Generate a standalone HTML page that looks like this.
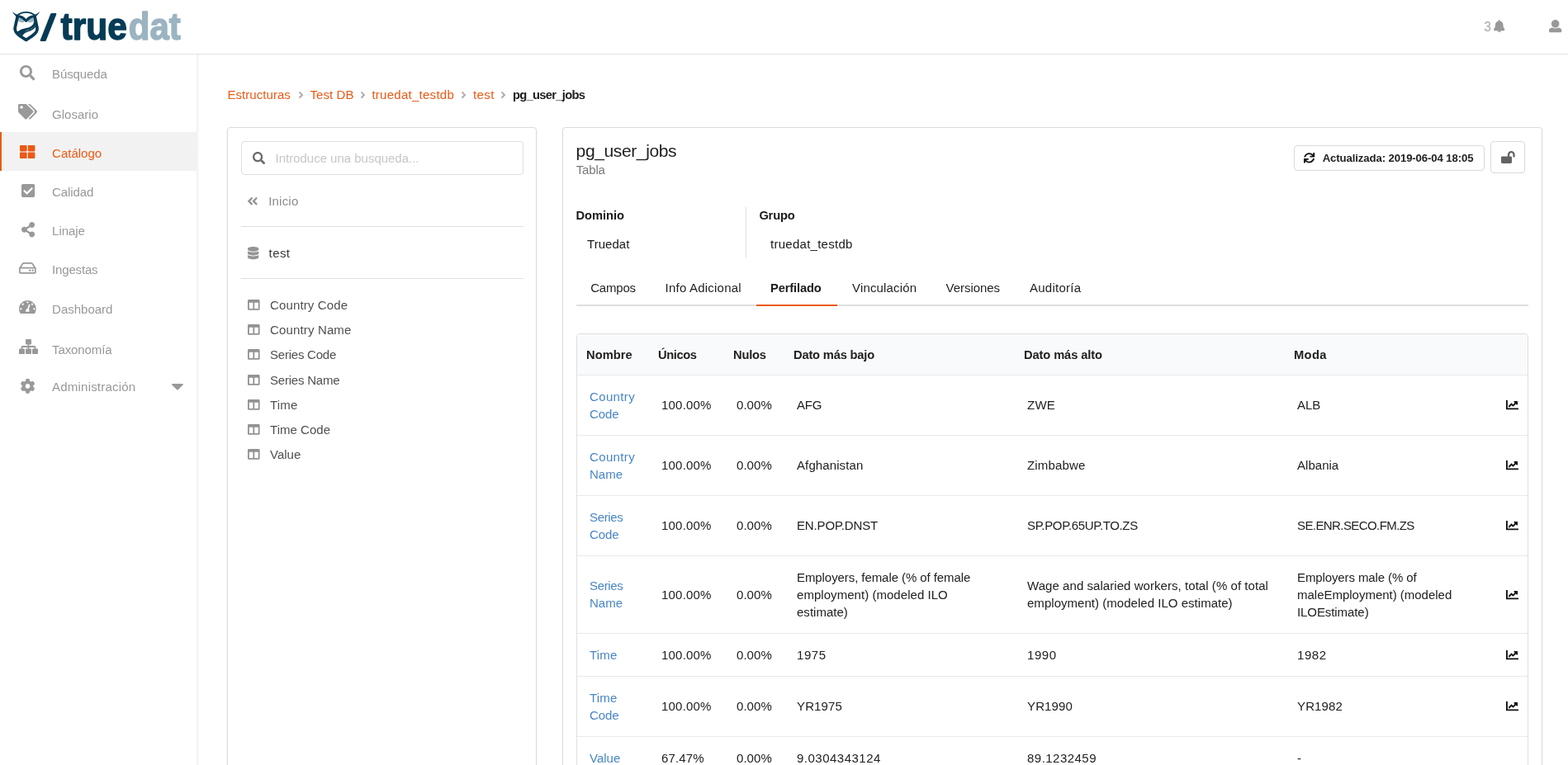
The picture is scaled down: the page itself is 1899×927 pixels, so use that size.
<!DOCTYPE html>
<html lang="es">
<head>
<meta charset="utf-8">
<title>truedat - pg_user_jobs</title>
<style>
*{box-sizing:border-box}
html,body{margin:0;padding:0;width:1899px;height:927px;overflow:hidden;background:#fff;font-family:"Liberation Sans",sans-serif}
#app{position:relative;width:1899px;height:927px;overflow:hidden;background:#fff;will-change:transform;font-family:"Liberation Sans",sans-serif;font-size:15.4px;color:#212121}
.t{position:absolute;white-space:nowrap;margin:0;padding:0;font-weight:400}
.ic{position:absolute;display:block;overflow:visible}
a{text-decoration:none;color:inherit}
ul{list-style:none;margin:0;padding:0}
#topbar{position:absolute;left:0;top:0;width:1899px;height:66px;background:#fff;border-bottom:1px solid #e6e6e6;box-shadow:0 1px 1px rgba(0,0,0,.025);z-index:3}
#sidebar{position:absolute;left:0;top:66px;width:238px;height:861px;background:#fff;z-index:2}
#sidebar:after{content:'';position:absolute;left:238px;top:0;width:4px;height:861px;background:linear-gradient(to right,rgba(0,0,0,.06),rgba(0,0,0,.035) 35%,rgba(0,0,0,0))}
#sidebar .active{position:absolute;left:0;top:94px;width:238px;height:47px;background:#f2f2f2;border-left:2px solid #ea5a16}
.seg{position:absolute;background:#fff;border:1px solid #dcdcdd;border-radius:4px;box-shadow:0 1px 2px 0 rgba(34,36,38,.12)}
.hr{position:absolute;height:1px;background:#dededf}
#search{position:absolute;left:292px;top:171px;width:342px;height:41px;border:1px solid #dededf;border-radius:4px;background:#fff}
.lbl{position:absolute;border:1px solid #d9d9da;border-radius:4px;background:#fff}
#tabs{position:absolute;left:698px;top:369px;width:1153px;height:2px;background:#dededf}
#tabs i{position:absolute;left:218px;top:0;width:98px;height:2px;background:#ea5a16}
table{position:absolute;left:698px;top:404px;width:1153px;border-collapse:separate;border-spacing:0;border:1px solid #dededf;border-radius:4px;table-layout:fixed;font-size:15.02px;line-height:21px;color:#212121}
th{height:50px;padding:2px 0 0 11px;text-align:left;font-weight:700;font-size:14.71px;background:#f9fafb;border-bottom:1px solid #e7e8e9;white-space:nowrap;vertical-align:middle}
th:first-child{border-radius:3px 0 0 0}
th:last-child{border-radius:0 3px 0 0}
td{padding:0 0 0 15px;vertical-align:middle;white-space:nowrap;border-top:1px solid #e9e9e9}
tbody tr:first-child td{border-top:none}
td a{color:#4a86c5}
td.o{padding-bottom:1px}
td.c{padding-left:11px}
td.c svg{display:inline-block;width:15px;height:11.25px;vertical-align:baseline;overflow:visible}
</style>
</head>
<body>
<div id="app">

<header id="topbar">
<svg class="ic" style="left:13px;top:12px;width:38px;height:40px" viewBox="13 12 38 40">
<ellipse cx="25.6" cy="24.4" rx="4.3" ry="2.7" fill="#9bb4c1" transform="rotate(14 25.6 24.4)"/>
<ellipse cx="37.6" cy="24.4" rx="4.3" ry="2.7" fill="#9bb4c1" transform="rotate(-14 37.6 24.4)"/>
<g fill="none" stroke="#063b56" stroke-linecap="round" stroke-linejoin="round">
<path d="M21.2 19.8 L18.2 33.6 C17.4 38.4 20.6 41.4 31.6 48.4 C42.6 41.4 45.8 38.4 45 33.6 L42 19.8" stroke-width="3.7"/>
<path d="M20.8 19.6 C25.4 19.6 28.8 21.8 31.6 25.4 C34.4 21.8 37.8 19.6 42.4 19.6" stroke-width="3.1"/>
<path d="M20.4 18.9 C26.8 13.5 36.4 13.5 42.8 18.9" stroke-width="1.7"/>
<path d="M42.6 26 C42 31.4 38.4 34.4 32 35.4 C27.4 36.2 24.4 37.6 22 39.4" stroke-width="2.7"/>
<path d="M43 31.4 C40.4 35.6 36.4 37 33.2 37.8 C30.4 38.8 28 40.4 26.6 42.4" stroke-width="1.7"/>
</g>
<path d="M15 14 C17.6 16.2 19.6 17.4 22.2 18.4 L20.2 20.4 C18 18.6 16.4 16.8 15 14 Z" fill="#063b56"/>
<path d="M48.2 14 C45.6 16.2 43.600 17.4 41 18.4 L43 20.4 C45.2 18.600 46.8 16.8 48.200 14 Z" fill="#063b56"/>
<path d="M21.600 39.600 C24.200 37.4 29 36.400 33.400 36.400 C30.400 38 27.800 40.200 26.600 42.800 Z" fill="#063b56"/>
</svg>
<svg class="ic" style="left:44px;top:6px;width:178px;height:52px" viewBox="44 6 178 52"><text x="52.6" y="48.3" font-family="Liberation Sans, sans-serif" font-weight="700" font-size="42.5" fill="#063b56" stroke="#063b56" stroke-width="2.3" stroke-linejoin="round" transform="translate(58.2 32.8) skewX(-11.5) translate(-58.2 -32.8)">/</text><text y="48.3" font-family="Liberation Sans, sans-serif" font-weight="700" font-size="47" stroke-width="1.5" stroke-linejoin="round"><tspan x="73.6" textLength="80.2" lengthAdjust="spacingAndGlyphs" fill="#063b56" stroke="#063b56">true</tspan><tspan x="155.8" textLength="63" lengthAdjust="spacingAndGlyphs" fill="#9bb4c1" stroke="#9bb4c1">dat</tspan></text></svg>
<div class="t" style="left:1797.2px;top:23px;font-size:15.6px;line-height:20px;color:#a6a6a6;letter-spacing:0.605px;">3</div>
<svg class="ic" style="left:1808.9px;top:23.9px;width:13.4px;height:15.0px" viewBox="0.0 0.0 448.0 512.0" preserveAspectRatio="none"><path fill="#999999" d="M433.884 366.059C411.634 343.809 384 316.118 384 208c0-79.394-57.831-145.269-133.663-157.83A31.845 31.845 0 0 0 256 32c0-17.673-14.327-32-32-32s-32 14.327-32 32c0 6.75 2.095 13.008 5.663 18.170C121.831 62.731 64 128.606 64 208c0 108.118-27.643 135.809-49.893 158.059C-16.042 396.208 5.325 448 48.048 448H160c0 35.346 28.654 64 64 64s64-28.654 64-64h111.943c42.638 0 64.151-51.731 33.941-81.941zM224 472a8 8 0 0 1 0 16c-22.056 0-40-17.944-40-40h16c0 13.234 10.766 24 24 24z"/></svg>
<svg class="ic" style="left:1875.8px;top:23.7px;width:15.3px;height:15.3px" viewBox="0 0 512 512" preserveAspectRatio="none"><path fill="#999999" d="M256 0c88.366 0 160 71.634 160 160s-71.634 160-160 160S96 248.366 96 160 167.634 0 256 0zm183.283 333.821l-71.313-17.828c-74.923 53.890-165.738 41.864-223.940 0l-71.313 17.828C29.981 344.505 0 382.903 0 426.955V464c0 26.510 21.490 48 48 48h416c26.510 0 48-21.490 48-48v-37.045c0-44.052-29.981-82.450-72.717-93.134z"/></svg>
</header>
<nav id="sidebar">
<div class="active"></div>
</nav>
<nav id="menu" style="position:absolute;left:0;top:0;z-index:4">
<a href="#"><svg class="ic" style="left:24.2px;top:78.8px;width:18.4px;height:18.4px" viewBox="0.0 0.0 512.0 512.1" preserveAspectRatio="none"><path fill="#999999" d="M505 442.7L405.3 343c-4.5-4.5-10.6-7-17-7H372c27.6-35.3 44-79.7 44-128C416 93.1 322.9 0 208 0S0 93.1 0 208s93.1 208 208 208c48.3 0 92.7-16.4 128-44v16.3c0 6.4 2.5 12.5 7 17l99.700 99.700c9.400 9.400 24.600 9.400 33.900 0l28.300-28.300c9.400-9.400 9.400-24.600.1-34zM208 336c-70.7 0-128-57.2-128-128 0-70.7 57.2-128 128-128 70.7 0 128 57.2 128 128 0 70.7-57.2 128-128 128z"/></svg><span class="t" style="left:63.1px;top:80px;font-size:15.02px;line-height:20px;color:#999999;letter-spacing:-0.122px;">Búsqueda</span></a>
<a href="#"><svg class="ic" style="left:22.3px;top:125.85px;width:23.0px;height:18.4px" viewBox="0.0 0.0 640.0 512.0" preserveAspectRatio="none"><path fill="#999999" d="M497.941 225.941L286.059 14.059A48 48 0 0 0 252.118 0H48C21.49 0 0 21.49 0 48v204.118a48 48 0 0 0 14.059 33.941l211.882 211.882c18.744 18.745 49.136 18.746 67.882 0l204.118-204.118c18.745-18.745 18.745-49.137 0-67.882zM112 160c-26.51 0-48-21.49-48-48s21.490-48 48-48 48 21.490 48 48-21.490 48-48 48zm513.941 133.823L421.823 497.941c-18.745 18.745-49.137 18.745-67.882 0l-.36-.36L527.640 323.522c16.999-16.999 26.360-39.600 26.360-63.640s-9.362-46.641-26.360-63.640L331.397 0h48.721a48 48 0 0 1 33.941 14.059l211.882 211.882c18.745 18.745 18.745 49.137 0 67.882z"/></svg><span class="t" style="left:63.1px;top:129px;font-size:15.02px;line-height:20px;color:#999999;">Glosario</span></a>
<a href="#"><svg class="ic" style="left:24.3px;top:176.05px;width:18.4px;height:16.1px" viewBox="0.0 32.0 512.0 448.0" preserveAspectRatio="none"><path fill="#ea5a16" d="M296 32h192c13.255 0 24 10.745 24 24v160c0 13.255-10.745 24-24 24H296c-13.255 0-24-10.745-24-24V56c0-13.255 10.745-24 24-24zm-80 0H24C10.745 32 0 42.745 0 56v160c0 13.255 10.745 24 24 24h192c13.255 0 24-10.745 24-24V56c0-13.255-10.745-24-24-24zM0 296v160c0 13.255 10.745 24 24 24h192c13.255 0 24-10.745 24-24V296c0-13.255-10.745-24-24-24H24c-13.255 0-24 10.745-24 24zm296 184h192c13.255 0 24-10.745 24-24V296c0-13.255-10.745-24-24-24H296c-13.255 0-24 10.745-24 24v160c0 13.255 10.745 24 24 24z"/></svg><span class="t" style="left:63.1px;top:176px;font-size:15.02px;line-height:20px;color:#ea5a16;letter-spacing:-0.020px;">Catálogo</span></a>
<a href="#"><svg class="ic" style="left:25.75px;top:223.25px;width:16.1px;height:16.1px" viewBox="0.0 32.0 448.0 448.0" preserveAspectRatio="none"><path fill="#999999" d="M400 480H48c-26.51 0-48-21.49-48-48V80c0-26.51 21.49-48 48-48h352c26.51 0 48 21.49 48 48v352c0 26.51-21.49 48-48 48zm-204.686-98.059l184-184c6.248-6.248 6.248-16.379 0-22.627l-22.627-22.627c-6.248-6.248-16.379-6.249-22.628 0L184 302.745l-70.059-70.059c-6.248-6.248-16.379-6.248-22.628 0l-22.627 22.627c-6.248 6.248-6.248 16.379 0 22.627l104 104c6.249 6.25 16.379 6.25 22.628.001z"/></svg><span class="t" style="left:63.1px;top:223px;font-size:15.02px;line-height:20px;color:#999999;letter-spacing:-0.108px;">Calidad</span></a>
<a href="#"><svg class="ic" style="left:25.6px;top:268.8px;width:16.1px;height:18.4px" viewBox="0.0 0.0 448.0 512.0" preserveAspectRatio="none"><path fill="#999999" d="M352 320c-22.608 0-43.387 7.819-59.79 20.895l-102.486-64.054a96.551 96.551 0 0 0 0-41.683l102.486-64.054C308.613 184.181 329.392 192 352 192c53.019 0 96-42.981 96-96S405.019 0 352 0s-96 42.981-96 96c0 7.158.79 14.13 2.276 20.841L155.790 180.895C139.387 167.819 118.608 160 96 160c-53.019 0-96 42.981-96 96s42.981 96 96 96c22.608 0 43.387-7.819 59.790-20.895l102.486 64.054A96.301 96.301 0 0 0 256 416c0 53.019 42.981 96 96 96s96-42.981 96-96-42.981-96-96-96z"/></svg><span class="t" style="left:63.1px;top:270px;font-size:15.02px;line-height:20px;color:#999999;letter-spacing:-0.068px;">Linaje</span></a>
<a href="#"><svg class="ic" style="left:23.05px;top:318.4px;width:20.7px;height:13.8px" viewBox="0.0 64.0 576.0 384.0" preserveAspectRatio="none"><path fill="#999999" d="M567.403 235.642L462.323 84.589A48 48 0 0 0 422.919 64H153.081a48 48 0 0 0-39.404 20.589L8.597 235.642A48.001 48.001 0 0 0 0 263.054V400c0 26.51 21.49 48 48 48h480c26.51 0 48-21.49 48-48V263.054c0-9.801-3-19.366-8.597-27.412zM153.081 112h269.838l77.913 112H75.168l77.913-112zM528 400H48V272h480v128zm-32-64c0 17.673-14.327 32-32 32s-32-14.327-32-32 14.327-32 32-32 32 14.327 32 32zm-96 0c0 17.673-14.327 32-32 32s-32-14.327-32-32 14.327-32 32-32 32 14.327 32 32z"/></svg><span class="t" style="left:63.1px;top:317px;font-size:15.02px;line-height:20px;color:#999999;letter-spacing:-0.182px;">Ingestas</span></a>
<a href="#"><svg class="ic" style="left:23.05px;top:363.95px;width:20.7px;height:16.1px" viewBox="0.0 32.0 576.0 448.0" preserveAspectRatio="none"><path fill="#999999" d="M75.694 480a48.020 48.020 0 0 1-42.448-25.571C12.023 414.3 0 368.556 0 320 0 160.942 128.942 32 288 32s288 128.942 288 288c0 48.556-12.023 94.3-33.246 134.429A48.018 48.018 0 0 1 500.306 480H75.694zM512 288c-17.673 0-32 14.327-32 32 0 17.673 14.327 32 32 32s32-14.327 32-32c0-17.673-14.327-32-32-32zM288 128c17.673 0 32-14.327 32-32 0-17.673-14.327-32-32-32s-32 14.327-32 32c0 17.673 14.327 32 32 32zM64 288c-17.673 0-32 14.327-32 32 0 17.673 14.327 32 32 32s32-14.327 32-32c0-17.673-14.327-32-32-32zm65.608-158.392c-17.673 0-32 14.327-32 32 0 17.673 14.327 32 32 32s32-14.327 32-32c0-17.673-14.327-32-32-32zm316.784 0c-17.673 0-32 14.327-32 32 0 17.673 14.327 32 32 32s32-14.327 32-32c0-17.673-14.327-32-32-32zm-87.078 31.534c-12.627-4.040-26.133 2.920-30.173 15.544l-45.923 143.511C250.108 322.645 224 350.264 224 384c0 11.821 3.220 22.881 8.809 32.380h110.383c5.588-9.499 8.809-20.559 8.809-32.380 0-19.850-9.040-37.580-23.219-49.321l45.923-143.511c4.040-12.625-2.920-26.133-15.544-30.173z"/></svg><span class="t" style="left:63.1px;top:365px;font-size:15.02px;line-height:20px;color:#999999;letter-spacing:-0.012px;">Dashboard</span></a>
<a href="#"><svg class="ic" style="left:22.55px;top:411.08px;width:23.0px;height:18.03px" viewBox="0.0 32.0 640.0 448.0" preserveAspectRatio="none"><path fill="#999999" d="M616 320h-48v-48c0-22.056-17.944-40-40-40H344v-40h48c13.255 0 24-10.745 24-24V56c0-13.255-10.745-24-24-24H248c-13.255 0-24 10.745-24 24v112c0 13.255 10.745 24 24 24h48v40H112c-22.056 0-40 17.944-40 40v48H24c-13.255 0-24 10.745-24 24v112c0 13.255 10.745 24 24 24h144c13.255 0 24-10.745 24-24V344c0-13.255-10.745-24-24-24h-48v-40h176v40h-48c-13.255 0-24 10.745-24 24v112c0 13.255 10.745 24 24 24h144c13.255 0 24-10.745 24-24V344c0-13.255-10.745-24-24-24h-48v-40h176v40h-48c-13.255 0-24 10.745-24 24v112c0 13.255 10.745 24 24 24h144c13.255 0 24-10.745 24-24V344c0-13.255-10.745-24-24-24z"/></svg><span class="t" style="left:63.1px;top:414px;font-size:15.02px;line-height:20px;color:#999999;letter-spacing:-0.120px;">Taxonomía</span></a>
<a href="#"><svg class="ic" style="left:24.97px;top:459.29px;width:17.06px;height:17.83px" viewBox="18.6 8.0 474.8 496.0" preserveAspectRatio="none"><path fill="#999999" d="M444.788 291.1l42.616 24.599c4.867 2.809 7.126 8.618 5.459 13.985-11.07 35.642-29.97 67.842-54.689 94.586a12.016 12.016 0 0 1-14.832 2.254l-42.584-24.595a191.577 191.577 0 0 1-60.759 35.13v49.182a12.01 12.01 0 0 1-9.377 11.718c-34.956 7.85-72.499 8.256-109.219.007-5.49-1.233-9.403-6.096-9.403-11.723v-49.184a191.555 191.555 0 0 1-60.759-35.13l-42.584 24.595a12.016 12.016 0 0 1-14.832-2.254c-24.718-26.744-43.619-58.944-54.689-94.586-1.667-5.366.592-11.175 5.459-13.985L67.212 291.1a193.48 193.48 0 0 1 0-70.199l-42.616-24.599c-4.867-2.809-7.126-8.618-5.459-13.985 11.07-35.642 29.97-67.842 54.689-94.586a12.016 12.016 0 0 1 14.832-2.254l42.584 24.595a191.577 191.577 0 0 1 60.759-35.13V25.759a12.01 12.01 0 0 1 9.377-11.718c34.956-7.85 72.499-8.256 109.219-.007 5.49 1.233 9.403 6.096 9.403 11.723v49.184a191.555 191.555 0 0 1 60.759 35.13l42.584-24.595a12.016 12.016 0 0 1 14.832 2.254c24.718 26.744 43.619 58.944 54.689 94.586 1.667 5.366-.592 11.175-5.459 13.985L444.788 220.9a193.485 193.485 0 0 1 0 70.2zM336 256c0-44.112-35.888-80-80-80s-80 35.888-80 80 35.888 80 80 80 80-35.888 80-80z"/></svg><span class="t" style="left:63.1px;top:459px;font-size:15.02px;line-height:20px;color:#999999;letter-spacing:0.196px;">Administración</span></a>
<svg class="ic" style="left:207.9px;top:464.9px;width:13.9px;height:7.4px" viewBox="11.3 192.0 297.3 168.6" preserveAspectRatio="none"><path fill="#999999" d="M31.3 192h257.3c17.8 0 26.7 21.5 14.1 34.1L174.100 354.800c-7.800 7.800-20.500 7.800-28.300 0L17.200 226.100C4.600 213.500 13.500 192 31.300 192z"/></svg>
</nav>
<div id="breadcrumb">
<a class="t" style="left:275.5px;top:105px;font-size:15.02px;line-height:20px;color:#ea5a16;letter-spacing:0.042px;" href="#">Estructuras</a>
<a class="t" style="left:375.5px;top:105px;font-size:15.02px;line-height:20px;color:#ea5a16;letter-spacing:0.081px;" href="#">Test DB</a>
<a class="t" style="left:450.4px;top:105px;font-size:15.02px;line-height:20px;color:#ea5a16;letter-spacing:0.260px;" href="#">truedat_testdb</a>
<a class="t" style="left:573px;top:105px;font-size:15.02px;line-height:20px;color:#ea5a16;letter-spacing:0.399px;" href="#">test</a>
<svg class="ic" style="left:361.78px;top:110.94px;width:5.25px;height:8.13px" viewBox="24.7 95.9 206.6 320.1" preserveAspectRatio="none"><path fill="#adadad" d="M224.3 273l-136 136c-9.4 9.4-24.6 9.4-33.9 0l-22.600-22.600c-9.400-9.400-9.400-24.600 0-33.900l96.400-96.400-96.400-96.400c-9.400-9.400-9.400-24.600 0-33.900L54.300 103c9.400-9.400 24.600-9.400 33.900 0l136 136c9.500 9.400 9.500 24.600.1 34z"/></svg>
<svg class="ic" style="left:436.53px;top:110.94px;width:5.25px;height:8.13px" viewBox="24.7 95.9 206.6 320.1" preserveAspectRatio="none"><path fill="#adadad" d="M224.3 273l-136 136c-9.4 9.4-24.6 9.4-33.9 0l-22.600-22.600c-9.400-9.400-9.400-24.600 0-33.900l96.400-96.400-96.400-96.400c-9.400-9.400-9.400-24.600 0-33.900L54.300 103c9.400-9.400 24.600-9.400 33.900 0l136 136c9.500 9.400 9.500 24.600.1 34z"/></svg>
<svg class="ic" style="left:558.93px;top:110.94px;width:5.25px;height:8.13px" viewBox="24.7 95.9 206.6 320.1" preserveAspectRatio="none"><path fill="#adadad" d="M224.3 273l-136 136c-9.4 9.4-24.6 9.4-33.9 0l-22.600-22.600c-9.400-9.400-9.400-24.600 0-33.900l96.400-96.400-96.400-96.400c-9.400-9.400-9.400-24.600 0-33.900L54.300 103c9.400-9.400 24.600-9.400 33.900 0l136 136c9.500 9.400 9.500 24.600.1 34z"/></svg>
<svg class="ic" style="left:607.33px;top:110.94px;width:5.25px;height:8.13px" viewBox="24.7 95.9 206.6 320.1" preserveAspectRatio="none"><path fill="#adadad" d="M224.3 273l-136 136c-9.4 9.4-24.6 9.4-33.9 0l-22.600-22.600c-9.400-9.400-9.400-24.600 0-33.900l96.400-96.400-96.400-96.400c-9.400-9.400-9.400-24.600 0-33.900L54.300 103c9.400-9.400 24.600-9.400 33.900 0l136 136c9.500 9.400 9.500 24.600.1 34z"/></svg>
<div class="t" style="left:621px;top:105px;font-size:14.71px;line-height:20px;color:#1b1c1d;font-weight:700;letter-spacing:-0.695px;">pg_user_jobs</div>
</div>
<section class="seg" style="left:275px;top:154px;width:375px;height:800px"></section>
<div id="search"></div>
<svg class="ic" style="left:305.7px;top:183.9px;width:15.1px;height:15.1px" viewBox="0.0 0.0 512.0 512.1" preserveAspectRatio="none"><path fill="#6c6c6c" d="M505 442.7L405.3 343c-4.5-4.5-10.6-7-17-7H372c27.6-35.3 44-79.7 44-128C416 93.1 322.9 0 208 0S0 93.1 0 208s93.1 208 208 208c48.3 0 92.7-16.4 128-44v16.3c0 6.4 2.5 12.5 7 17l99.700 99.700c9.400 9.400 24.600 9.400 33.900 0l28.300-28.300c9.400-9.400 9.400-24.600.1-34zM208 336c-70.7 0-128-57.2-128-128 0-70.7 57.2-128 128-128 70.7 0 128 57.2 128 128 0 70.7-57.2 128-128 128z"/></svg>
<div class="t" style="left:333.6px;top:182px;font-size:15.02px;line-height:20px;color:#c7c7c7;letter-spacing:-0.025px;">Introduce una busqueda...</div>
<svg class="ic" style="left:300.36px;top:238.76px;width:11.68px;height:9.38px" viewBox="24.7 95.9 398.7 320.1" preserveAspectRatio="none"><path fill="#949494" d="M223.7 239l136-136c9.4-9.4 24.6-9.4 33.9 0l22.600 22.600c9.400 9.400 9.400 24.600 0 33.900L319.900 256l96.400 96.400c9.400 9.400 9.400 24.600 0 33.900L393.700 409c-9.400 9.400-24.600 9.400-33.900 0l-136-136c-9.500-9.400-9.500-24.600-.1-34zm-192 34l136 136c9.400 9.400 24.600 9.400 33.900 0l22.600-22.600c9.400-9.400 9.400-24.600 0-33.900L127.900 256l96.400-96.400c9.400-9.400 9.400-24.600 0-33.900L201.700 103c-9.400-9.400-24.600-9.400-33.900 0l-136 136c-9.500 9.400-9.500 24.600-.1 34z"/></svg>
<div class="t" style="left:325.2px;top:234px;font-size:15.02px;line-height:20px;color:#8c8c8c;letter-spacing:0.201px;">Inicio</div>
<div class="hr" style="left:292px;top:274px;width:342px"></div>
<svg class="ic" style="left:299.8px;top:298.75px;width:13.3px;height:15.2px" viewBox="0.0 0.0 448.0 512.0" preserveAspectRatio="none"><path fill="#959595" d="M448 73.143v45.714C448 159.143 347.667 192 224 192S0 159.143 0 118.857V73.143C0 32.857 100.333 0 224 0s224 32.857 224 73.143zM448 176v102.857C448 319.143 347.667 352 224 352S0 319.143 0 278.857V176c48.125 33.143 136.208 48.572 224 48.572S399.874 209.143 448 176zm0 160v102.857C448 479.143 347.667 512 224 512S0 479.143 0 438.857V336c48.125 33.143 136.208 48.572 224 48.572S399.874 369.143 448 336z"/></svg>
<div class="t" style="left:325.6px;top:297px;font-size:15.02px;line-height:20px;color:#3a3a3a;letter-spacing:0.399px;">test</div>
<div class="hr" style="left:292px;top:337px;width:342px"></div>
<ul>
<li><svg class="ic" style="left:300.05px;top:362.91px;width:14.6px;height:12.78px" viewBox="0.0 32.0 512.0 448.0" preserveAspectRatio="none"><path fill="#939393" d="M464 32H48C21.49 32 0 53.49 0 80v352c0 26.51 21.49 48 48 48h416c26.51 0 48-21.49 48-48V80c0-26.51-21.49-48-48-48zM224 416H64V160h160v256zm224 0H288V160h160v256z"/></svg><span class="t" style="left:327px;top:360px;font-size:15.02px;line-height:20px;color:#505050;letter-spacing:0.127px;">Country Code</span></li>
<li><svg class="ic" style="left:300.05px;top:392.91px;width:14.6px;height:12.78px" viewBox="0.0 32.0 512.0 448.0" preserveAspectRatio="none"><path fill="#939393" d="M464 32H48C21.49 32 0 53.49 0 80v352c0 26.51 21.49 48 48 48h416c26.51 0 48-21.49 48-48V80c0-26.51-21.49-48-48-48zM224 416H64V160h160v256zm224 0H288V160h160v256z"/></svg><span class="t" style="left:327px;top:390px;font-size:15.02px;line-height:20px;color:#505050;letter-spacing:0.143px;">Country Name</span></li>
<li><svg class="ic" style="left:300.05px;top:422.91px;width:14.6px;height:12.78px" viewBox="0.0 32.0 512.0 448.0" preserveAspectRatio="none"><path fill="#939393" d="M464 32H48C21.49 32 0 53.49 0 80v352c0 26.51 21.49 48 48 48h416c26.51 0 48-21.49 48-48V80c0-26.51-21.49-48-48-48zM224 416H64V160h160v256zm224 0H288V160h160v256z"/></svg><span class="t" style="left:327px;top:420px;font-size:15.02px;line-height:20px;color:#505050;letter-spacing:-0.231px;">Series Code</span></li>
<li><svg class="ic" style="left:300.05px;top:453.91px;width:14.6px;height:12.78px" viewBox="0.0 32.0 512.0 448.0" preserveAspectRatio="none"><path fill="#939393" d="M464 32H48C21.49 32 0 53.49 0 80v352c0 26.51 21.49 48 48 48h416c26.51 0 48-21.49 48-48V80c0-26.51-21.49-48-48-48zM224 416H64V160h160v256zm224 0H288V160h160v256z"/></svg><span class="t" style="left:327px;top:451px;font-size:15.02px;line-height:20px;color:#505050;letter-spacing:-0.213px;">Series Name</span></li>
<li><svg class="ic" style="left:300.05px;top:483.91px;width:14.6px;height:12.78px" viewBox="0.0 32.0 512.0 448.0" preserveAspectRatio="none"><path fill="#939393" d="M464 32H48C21.49 32 0 53.49 0 80v352c0 26.51 21.49 48 48 48h416c26.51 0 48-21.49 48-48V80c0-26.51-21.49-48-48-48zM224 416H64V160h160v256zm224 0H288V160h160v256z"/></svg><span class="t" style="left:327px;top:481px;font-size:15.02px;line-height:20px;color:#505050;letter-spacing:0.181px;">Time</span></li>
<li><svg class="ic" style="left:300.05px;top:513.91px;width:14.6px;height:12.78px" viewBox="0.0 32.0 512.0 448.0" preserveAspectRatio="none"><path fill="#939393" d="M464 32H48C21.49 32 0 53.49 0 80v352c0 26.51 21.49 48 48 48h416c26.51 0 48-21.49 48-48V80c0-26.51-21.49-48-48-48zM224 416H64V160h160v256zm224 0H288V160h160v256z"/></svg><span class="t" style="left:327px;top:511px;font-size:15.02px;line-height:20px;color:#505050;letter-spacing:0.023px;">Time Code</span></li>
<li><svg class="ic" style="left:300.05px;top:543.91px;width:14.6px;height:12.78px" viewBox="0.0 32.0 512.0 448.0" preserveAspectRatio="none"><path fill="#939393" d="M464 32H48C21.49 32 0 53.49 0 80v352c0 26.51 21.49 48 48 48h416c26.51 0 48-21.49 48-48V80c0-26.51-21.49-48-48-48zM224 416H64V160h160v256zm224 0H288V160h160v256z"/></svg><span class="t" style="left:327px;top:541px;font-size:15.02px;line-height:20px;color:#505050;">Value</span></li>
</ul>
<section class="seg" style="left:681px;top:154px;width:1187px;height:800px"></section>
<h2 class="t" style="left:697.6px;top:169px;font-size:21.08px;line-height:28px;color:#212121;letter-spacing:-0.416px;">pg_user_jobs</h2>
<div class="t" style="left:697.8px;top:196px;font-size:15.02px;line-height:20px;color:#7a7a7a;letter-spacing:-0.200px;">Tabla</div>
<div class="lbl" style="left:1567px;top:176px;width:231px;height:31px"></div>
<svg class="ic" style="left:1579.0px;top:184.6px;width:13.2px;height:12.6px" viewBox="0.0 0.0 512.3 512.0" preserveAspectRatio="none"><path fill="#111" d="M440.935 12.574l3.966 82.766C399.416 41.904 331.674 8 256 8 134.813 8 33.933 94.924 12.296 209.824 10.908 217.193 16.604 224 24.103 224h49.084c5.57 0 10.377-3.842 11.676-9.259C103.407 137.408 172.931 80 256 80c60.893 0 114.512 30.856 146.104 77.801l-101.53-4.865c-6.845-.328-12.574 5.133-12.574 11.986v47.411c0 6.627 5.373 12 12 12h200.333c6.627 0 12-5.373 12-12V12c0-6.627-5.373-12-12-12h-47.411c-6.853 0-12.315 5.729-11.987 12.574zM256 432c-60.895 0-114.517-30.858-146.109-77.805l101.868 4.871c6.845.327 12.573-5.134 12.573-11.986v-47.412c0-6.627-5.373-12-12-12H12c-6.627 0-12 5.373-12 12V500c0 6.627 5.373 12 12 12h47.385c6.863 0 12.328-5.745 11.985-12.599l-4.129-82.575C112.725 470.166 180.405 504 256 504c121.187 0 222.067-86.924 243.704-201.824 1.388-7.369-4.308-14.176-11.807-14.176h-49.084c-5.57 0-10.377 3.842-11.676 9.259C408.593 374.592 339.069 432 256 432z"/></svg>
<div class="t" style="left:1601.7px;top:182px;font-size:13.2px;line-height:20px;color:#222;font-weight:700;letter-spacing:-0.119px;">Actualizada: 2019-06-04 18:05</div>
<div class="lbl" style="left:1805px;top:171px;width:42px;height:39px"></div>
<svg class="ic" style="left:1817.9px;top:183.1px;width:16.7px;height:15.0px" viewBox="0.0 -0.0 576.0 512.0" preserveAspectRatio="none"><path fill="#636363" d="M423.5 0C339.5.3 272 69.5 272 153.5V224H48c-26.5 0-48 21.500-48 48v192c0 26.500 21.500 48 48 48h352c26.500 0 48-21.500 48-48V272c0-26.500-21.500-48-48-48h-48v-71.100c0-39.600 31.700-72.500 71.300-72.900 40-.4 72.700 32.100 72.700 72v80c0 13.300 10.700 24 24 24h32c13.300 0 24-10.700 24-24v-80C576 68 507.500-.3 423.500 0z"/></svg>
<div class="t" style="left:697.4px;top:251px;font-size:14.71px;line-height:20px;color:#1b1b1b;font-weight:700;letter-spacing:-0.017px;">Dominio</div>
<div class="t" style="left:711px;top:286px;font-size:15.02px;line-height:20px;color:#1b1b1b;letter-spacing:0.031px;">Truedat</div>
<div style="position:absolute;left:903px;top:251px;width:1px;height:61px;background:#dededf"></div>
<div class="t" style="left:919.4px;top:251px;font-size:14.71px;line-height:20px;color:#1b1b1b;font-weight:700;letter-spacing:-0.206px;">Grupo</div>
<div class="t" style="left:933px;top:286px;font-size:15.02px;line-height:20px;color:#1b1b1b;letter-spacing:0.260px;">truedat_testdb</div>
<div id="tabs"><i></i></div>
<a class="t" style="left:715.2px;top:339px;font-size:15.02px;line-height:20px;color:#1f1f1f;letter-spacing:-0.214px;" href="#">Campos</a>
<a class="t" style="left:805.6px;top:339px;font-size:15.02px;line-height:20px;color:#1f1f1f;letter-spacing:0.205px;" href="#">Info Adicional</a>
<a class="t" style="left:933px;top:339px;font-size:14.71px;line-height:20px;color:#1b1b1b;font-weight:700;letter-spacing:-0.147px;" href="#">Perfilado</a>
<a class="t" style="left:1032px;top:339px;font-size:15.02px;line-height:20px;color:#1f1f1f;letter-spacing:0.162px;" href="#">Vinculación</a>
<a class="t" style="left:1145.6px;top:339px;font-size:15.02px;line-height:20px;color:#1f1f1f;letter-spacing:-0.056px;" href="#">Versiones</a>
<a class="t" style="left:1247px;top:339px;font-size:15.02px;line-height:20px;color:#1f1f1f;letter-spacing:0.244px;" href="#">Auditoría</a>
<table>
<colgroup><col style="width:87px"><col style="width:91px"><col style="width:73px"><col style="width:279px"><col style="width:327px"><col style="width:257px"><col style="width:37px"></colgroup>
<thead><tr>
<th><span style="letter-spacing:0.046px;">Nombre</span></th>
<th><span style="letter-spacing:-0.394px;">Únicos</span></th>
<th><span style="letter-spacing:-0.202px;">Nulos</span></th>
<th><span style="letter-spacing:-0.194px;">Dato más bajo</span></th>
<th><span style="letter-spacing:-0.122px;">Dato más alto</span></th>
<th><span style="letter-spacing:0.328px;">Moda</span></th>
<th></th></tr></thead><tbody>
<tr style="height:72px"><td><a href="#"><span style="letter-spacing:0.345px;">Country</span><br><span style="letter-spacing:-0.071px;">Code</span></a></td><td class=o><span style="letter-spacing:0.192px;">100.00%</span></td><td class=o><span style="letter-spacing:0.038px;">0.00%</span></td><td class=o><span style="letter-spacing:-0.197px;">AFG</span></td><td class=o><span style="letter-spacing:0.248px;">ZWE</span></td><td class=o><span style="letter-spacing:-0.032px;">ALB</span></td><td class="c o"><svg viewBox="0 64 512 384" preserveAspectRatio="none"><path fill="#111" d="M500 384c6.600 0 12 5.400 12 12v40c0 6.600-5.400 12-12 12H12c-6.600 0-12-5.400-12-12V76c0-6.600 5.400-12 12-12h40c6.600 0 12 5.400 12 12v308h436zM456 96H344c-21.400 0-32.100 25.900-17 41l32.900 32.900-72 72.900-55.600-55.600c-4.700-4.700-12.200-4.700-16.900 0L96.400 305c-4.700 4.600-4.800 12.200-.1 16.900l28.500 28.500c4.700 4.700 12.200 4.700 16.900 0l82.300-82.300 55.500 55.500c4.700 4.700 12.300 4.700 16.900 0l109-109.400 33.500 33.500c15.100 15.100 41 4.400 41-17V120c.1-13.300-10.600-24-23.900-24z"/></svg></td></tr>
<tr style="height:73px"><td><a href="#"><span style="letter-spacing:0.345px;">Country</span><br><span style="letter-spacing:-0.021px;">Name</span></a></td><td class=o><span style="letter-spacing:0.192px;">100.00%</span></td><td class=o><span style="letter-spacing:0.038px;">0.00%</span></td><td class=o><span style="letter-spacing:0.097px;">Afghanistan</span></td><td class=o><span style="letter-spacing:0.157px;">Zimbabwe</span></td><td class=o><span style="letter-spacing:0.021px;">Albania</span></td><td class="c o"><svg viewBox="0 64 512 384" preserveAspectRatio="none"><path fill="#111" d="M500 384c6.600 0 12 5.400 12 12v40c0 6.600-5.400 12-12 12H12c-6.600 0-12-5.400-12-12V76c0-6.600 5.400-12 12-12h40c6.600 0 12 5.400 12 12v308h436zM456 96H344c-21.400 0-32.100 25.900-17 41l32.900 32.900-72 72.900-55.600-55.600c-4.700-4.700-12.200-4.700-16.900 0L96.400 305c-4.700 4.600-4.800 12.200-.1 16.900l28.500 28.500c4.700 4.700 12.200 4.700 16.900 0l82.300-82.300 55.500 55.500c4.700 4.700 12.300 4.700 16.900 0l109-109.400 33.500 33.500c15.100 15.100 41 4.400 41-17V120c.1-13.300-10.600-24-23.900-24z"/></svg></td></tr>
<tr style="height:73px"><td><a href="#"><span style="letter-spacing:-0.338px;">Series</span><br><span style="letter-spacing:-0.071px;">Code</span></a></td><td class=o><span style="letter-spacing:0.192px;">100.00%</span></td><td class=o><span style="letter-spacing:0.038px;">0.00%</span></td><td class=o><span style="letter-spacing:-0.160px;">EN.POP.DNST</span></td><td class=o><span style="letter-spacing:-0.360px;">SP.POP.65UP.TO.ZS</span></td><td class=o><span style="letter-spacing:-0.595px;">SE.ENR.SECO.FM.ZS</span></td><td class="c o"><svg viewBox="0 64 512 384" preserveAspectRatio="none"><path fill="#111" d="M500 384c6.600 0 12 5.400 12 12v40c0 6.600-5.400 12-12 12H12c-6.600 0-12-5.400-12-12V76c0-6.600 5.400-12 12-12h40c6.600 0 12 5.400 12 12v308h436zM456 96H344c-21.400 0-32.100 25.900-17 41l32.900 32.900-72 72.900-55.600-55.600c-4.700-4.700-12.200-4.700-16.900 0L96.400 305c-4.700 4.600-4.800 12.200-.1 16.900l28.500 28.500c4.700 4.700 12.200 4.700 16.900 0l82.300-82.300 55.500 55.500c4.700 4.700 12.300 4.700 16.900 0l109-109.400 33.500 33.500c15.100 15.100 41 4.400 41-17V120c.1-13.300-10.600-24-23.900-24z"/></svg></td></tr>
<tr style="height:94px"><td class=o><a href="#"><span style="letter-spacing:-0.338px;">Series</span><br><span style="letter-spacing:-0.021px;">Name</span></a></td><td><span style="letter-spacing:0.192px;">100.00%</span></td><td><span style="letter-spacing:0.038px;">0.00%</span></td><td><span style="letter-spacing:-0.085px;">Employers, female (% of female</span><br><span style="letter-spacing:0.037px;">employment) (modeled ILO</span><br><span style="letter-spacing:0.013px;">estimate)</span></td><td class=o><span style="letter-spacing:0.048px;">Wage and salaried workers, total (% of total</span><br><span style="letter-spacing:0.023px;">employment) (modeled ILO estimate)</span></td><td><span style="letter-spacing:-0.119px;">Employers male (% of</span><br><span style="letter-spacing:-0.022px;">maleEmployment) (modeled</span><br><span style="letter-spacing:-0.090px;">ILOEstimate)</span></td><td class="c"><svg viewBox="0 64 512 384" preserveAspectRatio="none"><path fill="#111" d="M500 384c6.600 0 12 5.400 12 12v40c0 6.600-5.400 12-12 12H12c-6.600 0-12-5.400-12-12V76c0-6.600 5.400-12 12-12h40c6.600 0 12 5.400 12 12v308h436zM456 96H344c-21.400 0-32.100 25.900-17 41l32.900 32.900-72 72.900-55.600-55.600c-4.700-4.700-12.200-4.700-16.900 0L96.400 305c-4.700 4.600-4.800 12.200-.1 16.900l28.500 28.500c4.700 4.700 12.200 4.700 16.900 0l82.300-82.300 55.500 55.500c4.700 4.700 12.300 4.700 16.900 0l109-109.400 33.500 33.500c15.100 15.100 41 4.400 41-17V120c.1-13.300-10.600-24-23.900-24z"/></svg></td></tr>
<tr style="height:52px"><td><a href="#"><span style="letter-spacing:0.181px;">Time</span></a></td><td><span style="letter-spacing:0.192px;">100.00%</span></td><td><span style="letter-spacing:0.038px;">0.00%</span></td><td><span style="letter-spacing:0.579px;">1975</span></td><td><span style="letter-spacing:0.579px;">1990</span></td><td><span style="letter-spacing:0.579px;">1982</span></td><td class="c"><svg viewBox="0 64 512 384" preserveAspectRatio="none"><path fill="#111" d="M500 384c6.600 0 12 5.400 12 12v40c0 6.600-5.400 12-12 12H12c-6.600 0-12-5.400-12-12V76c0-6.600 5.400-12 12-12h40c6.600 0 12 5.400 12 12v308h436zM456 96H344c-21.400 0-32.100 25.900-17 41l32.900 32.900-72 72.900-55.600-55.600c-4.700-4.700-12.200-4.700-16.900 0L96.400 305c-4.700 4.600-4.800 12.200-.1 16.900l28.500 28.500c4.700 4.700 12.200 4.700 16.900 0l82.300-82.300 55.500 55.500c4.700 4.700 12.300 4.700 16.900 0l109-109.400 33.500 33.500c15.100 15.100 41 4.400 41-17V120c.1-13.300-10.600-24-23.900-24z"/></svg></td></tr>
<tr style="height:73px"><td><a href="#"><span style="letter-spacing:0.181px;">Time</span><br><span style="letter-spacing:-0.071px;">Code</span></a></td><td class=o><span style="letter-spacing:0.192px;">100.00%</span></td><td class=o><span style="letter-spacing:0.038px;">0.00%</span></td><td class=o><span style="letter-spacing:0.118px;">YR1975</span></td><td class=o><span style="letter-spacing:0.118px;">YR1990</span></td><td class=o><span style="letter-spacing:0.118px;">YR1982</span></td><td class="c o"><svg viewBox="0 64 512 384" preserveAspectRatio="none"><path fill="#111" d="M500 384c6.600 0 12 5.400 12 12v40c0 6.600-5.400 12-12 12H12c-6.600 0-12-5.400-12-12V76c0-6.600 5.400-12 12-12h40c6.600 0 12 5.400 12 12v308h436zM456 96H344c-21.400 0-32.100 25.900-17 41l32.900 32.900-72 72.900-55.600-55.600c-4.700-4.700-12.200-4.700-16.900 0L96.400 305c-4.700 4.600-4.800 12.200-.1 16.900l28.500 28.500c4.700 4.700 12.200 4.700 16.900 0l82.300-82.300 55.500 55.500c4.700 4.700 12.300 4.700 16.900 0l109-109.400 33.500 33.500c15.100 15.100 41 4.400 41-17V120c.1-13.300-10.600-24-23.900-24z"/></svg></td></tr>
<tr style="height:52px"><td><a href="#">Value</a></td><td><span style="letter-spacing:0.128px;">67.47%</span></td><td><span style="letter-spacing:0.038px;">0.00%</span></td><td><span style="letter-spacing:0.486px;">9.0304343124</span></td><td><span style="letter-spacing:0.467px;">89.1232459</span></td><td><span style="letter-spacing:0.720px;">-</span></td><td></td></tr>
</tbody></table>
</div>
</body></html>
